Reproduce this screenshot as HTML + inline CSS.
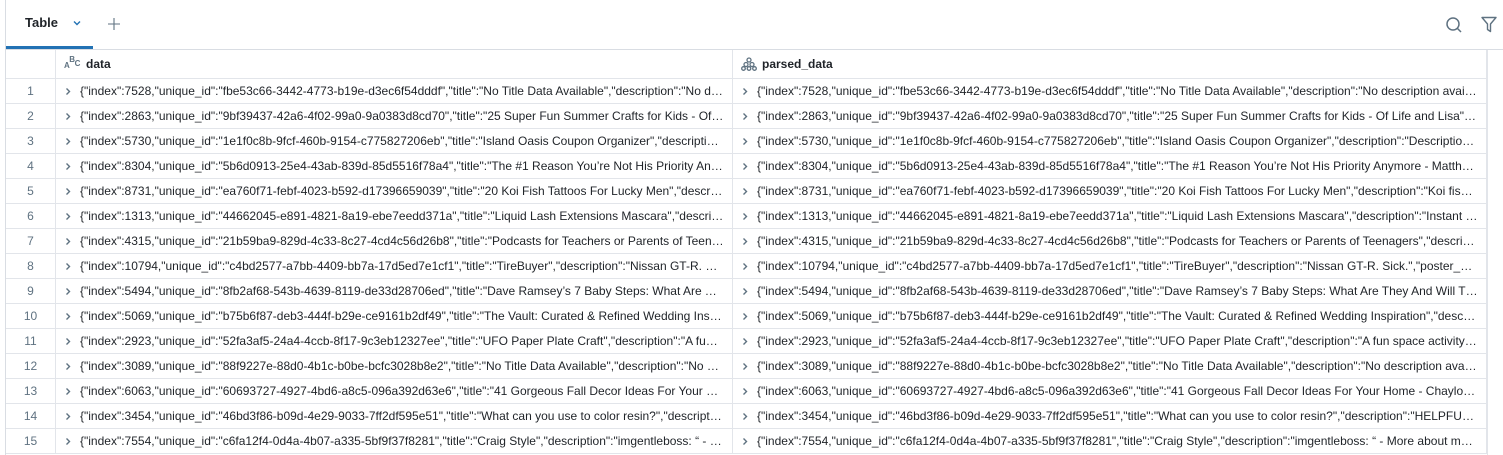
<!DOCTYPE html>
<html><head><meta charset="utf-8"><style>
*{box-sizing:border-box;margin:0;padding:0}
body{width:1503px;height:455px;overflow:hidden;background:#fff;font-family:"Liberation Sans",sans-serif;position:relative}
.lb{position:absolute;left:5px;top:0;width:1px;height:455px;background:#d9dde3}
.tab{position:absolute;left:25px;top:15px;font-size:13px;font-weight:bold;color:#1f2328}
.bar{position:absolute;left:6px;top:46px;width:87px;height:3px;background:#2272b4}
.hl{position:absolute;left:6px;top:49px;width:1497px;height:1px;background:#d9dde3}
.row{position:absolute;left:6px;width:1481px;height:25px;border-bottom:1px solid #e2e5ea;font-size:12px;color:#1f2328}
.c{position:absolute;top:0;height:100%;border-right:1px solid #e2e5ea;white-space:nowrap;overflow:hidden;text-overflow:ellipsis;line-height:24px}
.i{left:0;width:50px;text-align:center;color:#5f7281;padding-left:0}
.d{left:50px;width:677px;padding-left:24px;padding-right:8px}
.p{left:727px;width:754px;padding-left:24px;padding-right:8px;border-right:1px solid #e2e5ea}
.ch{position:absolute;top:8px;left:9px}
.hdr{top:50px;height:29px}
.hdr .c{line-height:28px;font-weight:bold;font-size:12px}
.vr{position:absolute;left:1487px;top:50px;width:1px;height:405px;background:#e2e5ea}
</style></head><body>
<div class="lb"></div>
<div class="tab">Table</div>
<svg style="position:absolute;left:72px;top:19px" width="10" height="8" viewBox="0 0 10 8"><path d="M2 2.5 L5 5.5 L8 2.5" fill="none" stroke="#2272b4" stroke-width="1.4"/></svg>
<svg style="position:absolute;left:107px;top:17px" width="14" height="14" viewBox="0 0 14 14"><path d="M7 1V13M1 7H13" stroke="#5f7281" stroke-width="1.1"/></svg>
<svg style="position:absolute;left:1445px;top:16px" width="18" height="18" viewBox="0 0 18 18"><circle cx="8" cy="8" r="6" fill="none" stroke="#5f7281" stroke-width="1.5"/><path d="M12.5 12.5L16 16" stroke="#5f7281" stroke-width="1.5"/></svg>
<svg style="position:absolute;left:1481px;top:16px" width="16" height="17" viewBox="0 0 16 17"><path d="M1 1.5H15L9.5 8V15.5L6.5 13.5V8Z" fill="none" stroke="#5f7281" stroke-width="1.4" stroke-linejoin="round"/></svg>
<div class="bar"></div>
<div class="hl"></div>
<div class="row hdr"><div class="c i"></div><div class="c d" style="padding-left:30px">data</div><div class="c p" style="padding-left:29px">parsed_data</div></div>
<div style="position:absolute;left:64px;top:56px;font-size:8px;font-weight:bold;color:#5f7281;line-height:8px;letter-spacing:-0.5px"><span style="position:relative;top:6px">A</span><span>B</span><span style="position:relative;top:4px">C</span></div>
<svg style="position:absolute;left:741px;top:57px" width="16" height="14" viewBox="0 0 16 14"><g fill="none" stroke="#5f7281" stroke-width="1.3"><circle cx="8" cy="3" r="2"/><circle cx="5" cy="7.5" r="2"/><circle cx="11" cy="7.5" r="2"/><circle cx="2.5" cy="11.5" r="1.8"/><circle cx="8" cy="11.5" r="1.8"/><circle cx="13.5" cy="11.5" r="1.8"/></g></svg>
<div class="vr"></div>
<div id="rows"></div>
<script>
const d=[
['7528','fbe53c66-3442-4773-b19e-d3ec6f54dddf','No Title Data Available','","description":"No description available'],
['2863','9bf39437-42a6-4f02-99a0-9a0383d8cd70','25 Super Fun Summer Crafts for Kids - Of Life and Lisa','","description":"'],
['5730','1e1f0c8b-9fcf-460b-9154-c775827206eb','Island Oasis Coupon Organizer','","description":"Description: Our coupon'],
['8304','5b6d0913-25e4-43ab-839d-85d5516f78a4','The #1 Reason You’re Not His Priority Anymore - Matthew','"'],
['8731','ea760f71-febf-4023-b592-d17396659039','20 Koi Fish Tattoos For Lucky Men','","description":"Koi fish tattoos are'],
['1313','44662045-e891-4821-8a19-ebe7eedd371a','Liquid Lash Extensions Mascara','","description":"Instant lash extensions'],
['4315','21b59ba9-829d-4c33-8c27-4cd4c56d26b8','Podcasts for Teachers or Parents of Teenagers','","description"'],
['10794','c4bd2577-a7bb-4409-bb7a-17d5ed7e1cf1','TireBuyer','","description":"Nissan GT-R. Sick.","poster_name"'],
['5494','8fb2af68-543b-4639-8119-de33d28706ed','Dave Ramsey’s 7 Baby Steps: What Are They And Will They Work','"'],
['5069','b75b6f87-deb3-444f-b29e-ce9161b2df49','The Vault: Curated &amp; Refined Wedding Inspiration','","description"'],
['2923','52fa3af5-24a4-4ccb-8f17-9c3eb12327ee','UFO Paper Plate Craft','","description":"A fun space activity for kids'],
['3089','88f9227e-88d0-4b1c-b0be-bcfc3028b8e2','No Title Data Available','","description":"No description available'],
['6063','60693727-4927-4bd6-a8c5-096a392d63e6','41 Gorgeous Fall Decor Ideas For Your Home - Chaylor','","description"'],
['3454','46bd3f86-b09d-4e29-9033-7ff2df595e51','What can you use to color resin?','","description":"HELPFUL RESIN TIPS'],
['7554','c6fa12f4-0d4a-4b07-a335-5bf9f37f8281','Craig Style','","description":"imgentleboss: “ - More about me and my'],
];
const chev='<svg class="ch" width="6" height="9" viewBox="0 0 6 9"><path d="M1.5 1.5L4.5 4.5L1.5 7.5" fill="none" stroke="#5f7281" stroke-width="1.4"/></svg>';
let h='';
d.forEach((r,k)=>{const t='{"index":'+r[0]+',"unique_id":"'+r[1]+'","title":"'+r[2]+r[3];
h+=`<div class="row" style="top:${79+k*25}px"><div class="c i">${k+1}</div><div class="c d">${chev}${t}</div><div class="c p">${chev}${t}</div></div>`;});
document.getElementById('rows').innerHTML=h;
</script>
</body></html>
